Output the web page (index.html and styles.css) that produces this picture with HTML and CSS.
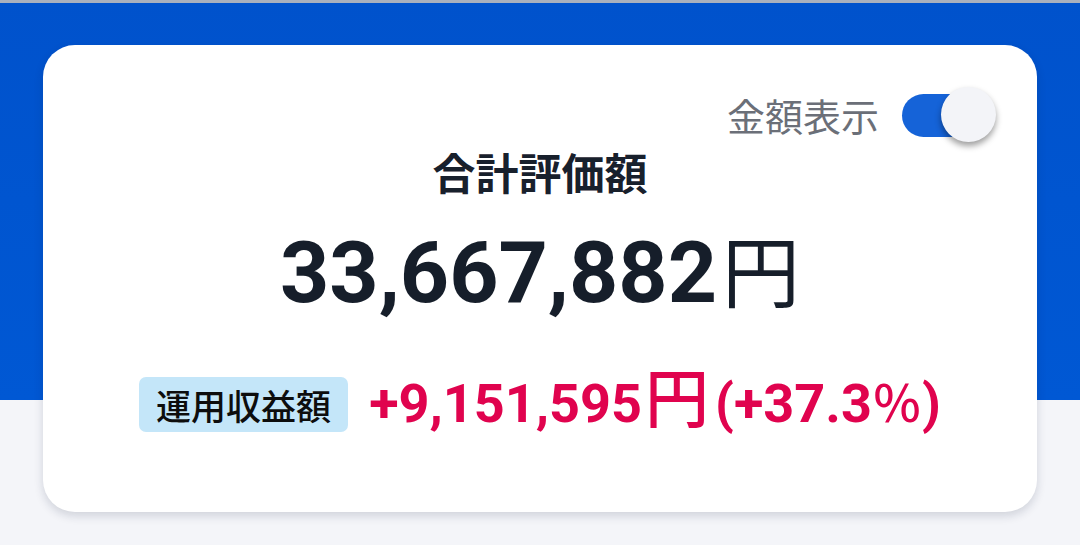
FILE: index.html
```html
<!DOCTYPE html>
<html lang="ja">
<head>
<meta charset="utf-8">
<link rel="stylesheet" href="styles.css">
</head>
<body>
<div class="topline"></div>
<div class="page">
  <div class="card">
    <div class="toggle-row">
      <span class="toggle-label">金額表示</span>
      <div class="toggle">
        <div class="track"></div>
        <div class="knob"></div>
      </div>
    </div>
    <div class="title">合計評価額</div>
    <div class="total"><span class="digits">33,667,882</span><span class="yen">円</span></div>
    <div class="profit-row">
      <span class="badge">運用収益額</span>
      <span class="profit"><span class="pdigits">+9,151,595</span><span class="pyen">円</span><span class="pct">(+37.3<span class="pcs">％</span>)</span></span>
    </div>
  </div>
</div>
</body>
</html>
```
FILE: styles.css
```css
html, body {
  margin: 0;
  padding: 0;
}
body {
  width: 1080px;
  height: 545px;
  overflow: hidden;
  font-family: Roboto, "Noto Sans CJK JP", sans-serif;
  background: linear-gradient(to bottom, #0052cc 0, #0058d4 400px, #f4f5f9 400px, #f4f5f9 100%);
}
.topline {
  height: 3px;
  background: #a9b0bd;
}
.page {
  padding: 42px 43px 0 43px;
}
.card {
  width: 994px;
  height: 467px;
  box-sizing: border-box;
  background: #ffffff;
  border-radius: 32px;
  box-shadow: 0 4px 10px rgba(20, 30, 60, 0.16);
  padding: 42px 41px 0 41px;
  display: flex;
  flex-direction: column;
  align-items: center;
}
.toggle-row {
  align-self: flex-end;
  display: flex;
  align-items: center;
  height: 56px;
  gap: 23px;
}
.toggle-label {
  font-family: "Noto Sans CJK JP", sans-serif;
  font-size: 38px;
  color: #6b6f78;
  line-height: 56px;
}
.toggle {
  position: relative;
  width: 94px;
  height: 56px;
}
.track {
  position: absolute;
  left: 0;
  top: 7px;
  width: 76px;
  height: 43px;
  border-radius: 22px;
  background: #1563d8;
}
.knob {
  position: absolute;
  right: 0;
  top: 0;
  width: 55px;
  height: 55px;
  border-radius: 50%;
  background: #f3f4f8;
  box-shadow: 0 4px 6px rgba(0, 0, 0, 0.38);
}
.title {
  margin-top: 0;
  font-family: "Noto Sans CJK JP", sans-serif;
  font-size: 43px;
  font-weight: 700;
  line-height: 56px;
  color: #18202c;
}
.total {
  margin-top: 21px;
  height: 100px;
  display: flex;
  align-items: baseline;
  color: #161e2a;
  line-height: 96px;
}
.digits {
  font-family: Roboto, sans-serif;
  font-weight: 700;
  font-size: 86px;
}
.yen {
  font-family: "Noto Sans CJK JP", sans-serif;
  font-weight: 400;
  font-size: 78px;
  margin-left: 5px;
}
.profit-row {
  margin-top: 44px;
  display: flex;
  align-items: center;
  gap: 21px;
}
.badge {
  display: block;
  height: 55px;
  box-sizing: border-box;
  padding: 0 17px;
  background: #c4e6f9;
  border-radius: 7px;
  font-family: "Noto Sans CJK JP", sans-serif;
  font-size: 35px;
  font-weight: 500;
  line-height: 55px;
  color: #0d0d0d;
}
.profit {
  display: flex;
  align-items: baseline;
  color: #e0034e;
  line-height: 60px;
  margin-bottom: 10px;
}
.pdigits {
  font-family: Roboto, sans-serif;
  font-weight: 700;
  font-size: 54px;
}
.pyen {
  font-family: "Noto Sans CJK JP", sans-serif;
  font-weight: 500;
  font-size: 64px;
  margin-left: 3px;
}
.pct {
  font-family: Roboto, sans-serif;
  font-weight: 700;
  font-size: 54px;
  margin-left: 6px;
}
.pcs {
  font-family: "Noto Sans CJK JP", sans-serif;
  font-weight: 500;
  font-size: 50px;
}
```
